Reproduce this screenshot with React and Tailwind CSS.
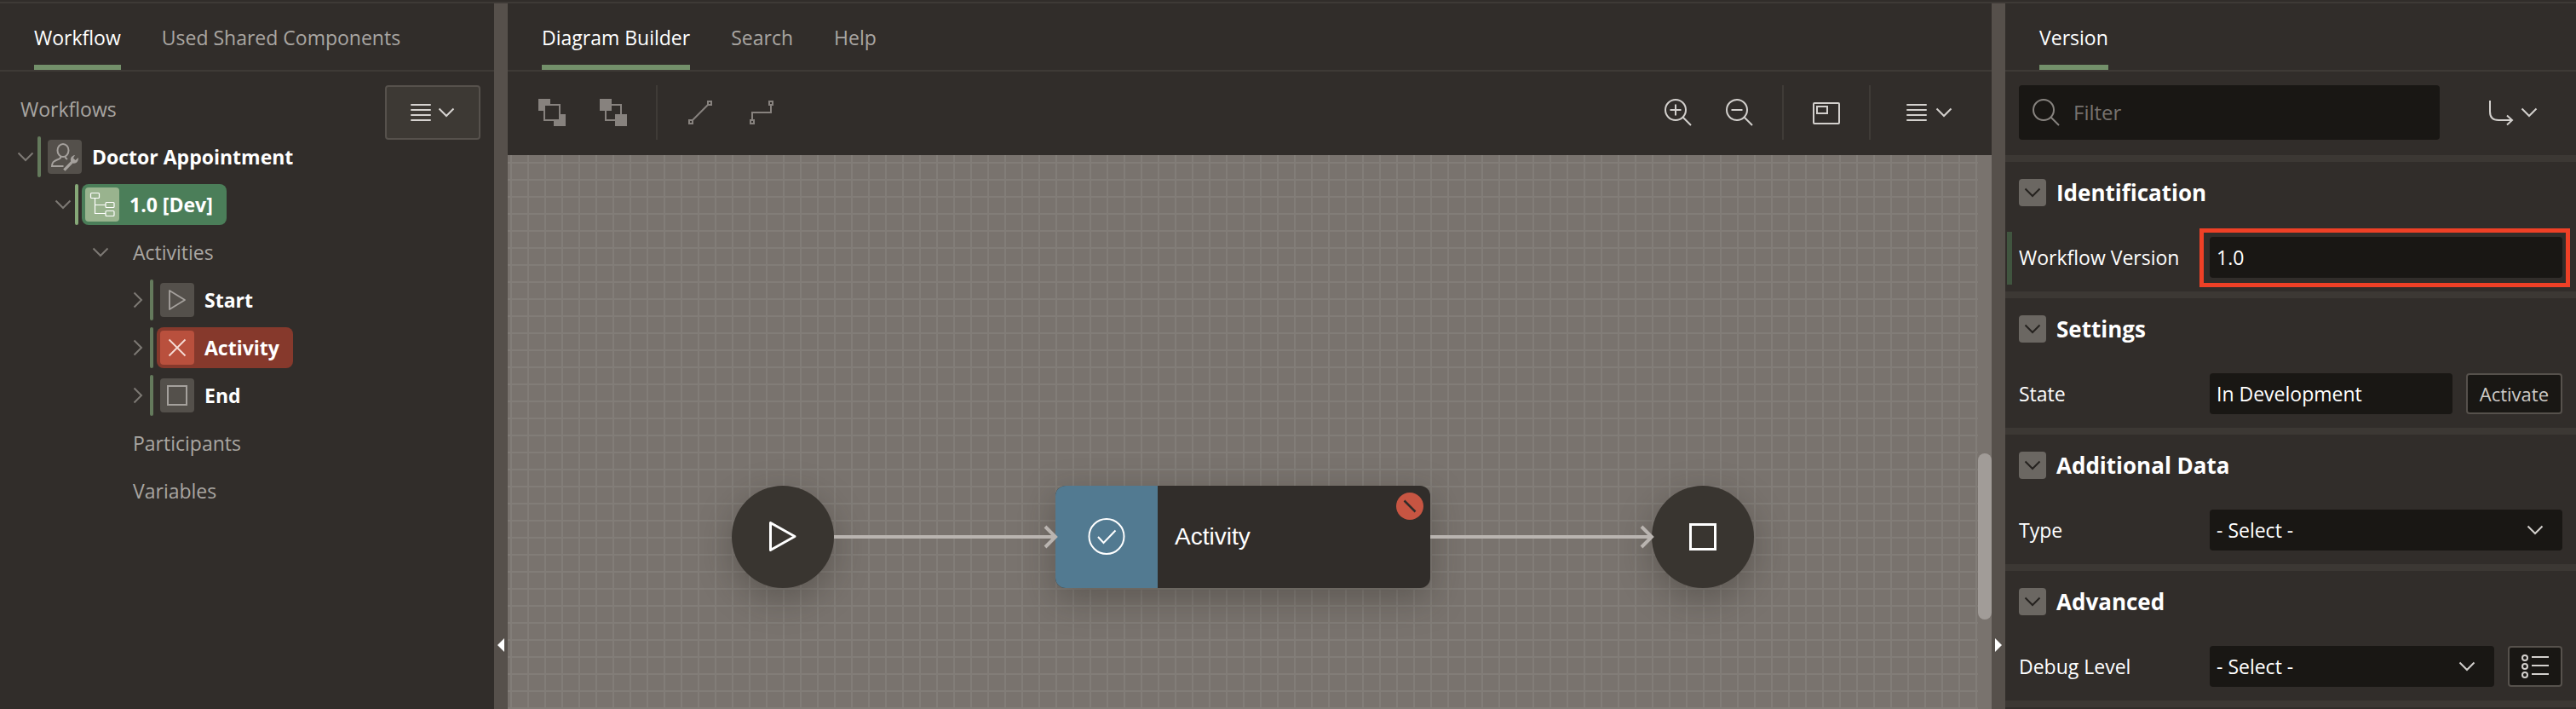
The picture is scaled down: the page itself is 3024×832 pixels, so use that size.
const ICON = { fill: "none", stroke: "currentColor" };

function Chevron({ dir = "down", className = "" }) {
  return dir === "down" ? (
    <svg width="20" height="12" viewBox="0 0 20 12" className={className} {...ICON} strokeWidth="2" aria-hidden="true">
      <path d="M1.5 1.5 10 10l8.500-8.500" />
    </svg>
  ) : (
    <svg width="12" height="20" viewBox="0 0 12 20" className={className} {...ICON} strokeWidth="2" aria-hidden="true">
      <path d="M1.500 1.500 10 10l-8.500 8.500" />
    </svg>
  );
}

function MenuIcon() {
  return (
    <svg width="24" height="20" viewBox="0 0 24 20" {...ICON} strokeWidth="2" strokeLinecap="round" aria-hidden="true">
      <path d="M1 1h22M1 7h22M1 13h22M1 19h22" />
    </svg>
  );
}

function Tabs({ items, label }) {
  return (
    <div role="tablist" aria-label={label} className="flex h-20 items-stretch gap-12 border-b-2 border-[#3e3a36] px-10">
      {items.map((t, i) => (
        <button
          key={t}
          type="button"
          role="tab"
          aria-selected={i === 0}
          className={
            "border-b-[6px] pt-2 text-[23px] font-medium " +
            (i === 0 ? "border-[#73906a] text-white" : "border-transparent text-[#a9a6a2]")
          }
        >
          {t}
        </button>
      ))}
    </div>
  );
}

function UserWrench() {
  return (
    <svg width="40" height="40" viewBox="0 0 40 40" {...ICON} strokeWidth="2" aria-hidden="true">
      <ellipse cx="18" cy="12.500" rx="6.500" ry="7.500" />
      <path d="M15.500 19.500c0 2.500-1.500 3-4.500 4-4 1.500-6 3-6 7.500h13.500M20.500 19.500c0 2 1 2.500 2.500 3.500" />
      <path d="M32 18c-4 .5-6 4-4.800 7.200L18.200 34.500l2.300 2.300 9-9.300c3.500 1 6.700-1.500 6.500-6.500l-3.500 3-2.500-2.500z" fill="currentColor" stroke="none" />
    </svg>
  );
}

function FlowTree() {
  return (
    <svg width="40" height="40" viewBox="0 0 40 40" {...ICON} strokeWidth="1.200" aria-hidden="true">
      <rect x="6.500" y="6.500" width="10" height="6" rx="1" />
      <rect x="24" y="17.500" width="10" height="6" rx="1" />
      <rect x="24" y="27.500" width="10" height="6" rx="1" />
      <path d="M11.500 12.500V30.500H24M11.500 20.500H24" />
    </svg>
  );
}

const GLYPHS = {
  user: <UserWrench />,
  flow: <FlowTree />,
  start: (
    <svg width="40" height="40" viewBox="0 0 40 40" {...ICON} strokeWidth="1.800" strokeLinejoin="round" aria-hidden="true">
      <path d="M11 9v22l18-11z" />
    </svg>
  ),
  error: (
    <svg width="40" height="40" viewBox="0 0 40 40" {...ICON} strokeWidth="1.800" aria-hidden="true">
      <path d="M10.500 10.500l19 19M29.500 10.500l-19 19" />
    </svg>
  ),
  end: (
    <svg width="40" height="40" viewBox="0 0 40 40" {...ICON} strokeWidth="2" aria-hidden="true">
      <rect x="9" y="9" width="22" height="22" />
    </svg>
  ),
};

const TONES = {
  plain: { pill: "", box: "bg-[#54504b] text-[#a5a19d]", bar: "bg-[#647a5c]" },
  green: { pill: "bg-[#4b7e59]", box: "bg-[#99b38e] text-white", bar: "bg-[#86a878]" },
  red: { pill: "bg-[#86392c]", box: "bg-[#b9503d] text-[#f6dcd6]", bar: "bg-[#647a5c]" },
};

function Item({ open, glyph, tone = "plain", children }) {
  const t = TONES[tone];
  return (
    <div className="flex h-12 items-center">
      <button type="button" aria-label="Toggle" aria-expanded={open} className="mr-1 flex h-5 w-5 items-center justify-center text-[#7d7974]">
        <Chevron dir={open ? "down" : "right"} />
      </button>
      <span className={"mr-1 h-12 w-1 rounded-sm " + t.bar} />
      <span className={"flex h-12 items-center gap-3 rounded-lg pr-4 pl-1 " + t.pill}>
        <span className={"rounded " + t.box}>{GLYPHS[glyph]}</span>
        <span className="text-[23px] font-bold text-white">{children}</span>
      </span>
    </div>
  );
}

function Leaf({ open, children }) {
  return (
    <div className="flex h-12 items-center text-[23px] font-medium text-[#a9a6a2]">
      <span className="mr-7 flex w-5 text-[#7d7974]">{open && <Chevron />}</span>
      {children}
    </div>
  );
}

function WorkflowPanel() {
  return (
    <aside className="flex w-[580px] shrink-0 flex-col">
      <Tabs label="Workflow" items={["Workflow", "Used Shared Components"]} />
      <div className="flex items-start justify-between pt-4 pr-4 pl-5">
        <ul className="flex flex-col gap-2 pt-1">
          <li className="flex flex-col gap-2">
            <div className="flex h-12 items-center pl-1 text-[23px] font-medium text-[#a9a6a2]">Workflows</div>
            <Item open glyph="user">Doctor Appointment</Item>
            <ul className="flex flex-col gap-2 pl-11">
              <li className="flex flex-col gap-2">
                <Item open glyph="flow" tone="green">1.0 [Dev]</Item>
                <ul className="flex flex-col gap-2 pl-11">
                  <li className="flex flex-col gap-2">
                    <Leaf open>Activities</Leaf>
                    <ul className="flex flex-col gap-2 pl-11">
                      <li><Item glyph="start">Start</Item></li>
                      <li><Item glyph="error" tone="red">Activity</Item></li>
                      <li><Item glyph="end">End</Item></li>
                    </ul>
                  </li>
                  <li><Leaf>Participants</Leaf></li>
                  <li><Leaf>Variables</Leaf></li>
                </ul>
              </li>
            </ul>
          </li>
        </ul>
        <button type="button" aria-label="Tree menu" className="flex h-16 w-28 items-center justify-center gap-2 rounded border-2 border-[#56514c] bg-[#3d3934] text-[#d6d3d0]">
          <MenuIcon />
          <Chevron />
        </button>
      </div>
    </aside>
  );
}

function Splitter({ dir }) {
  return (
    <div role="separator" aria-orientation="vertical" className="flex w-4 shrink-0 flex-col items-center justify-end bg-[#56504b] pb-[67px]">
      <svg width="8" height="16" viewBox="0 0 8 16" fill="#fff" aria-hidden="true">
        <path d={dir === "left" ? "M8 0v16L0 8z" : "M0 0v16l8-8z"} />
      </svg>
    </div>
  );
}

function Tool({ label, className = "text-[#87827e]", children }) {
  return (
    <button type="button" aria-label={label} className={"flex h-16 items-center px-5 " + className}>
      {children}
    </button>
  );
}

function Magnifier({ children }) {
  return (
    <svg width="32" height="32" viewBox="0 0 32 32" {...ICON} strokeWidth="2" aria-hidden="true">
      <circle cx="13" cy="13" r="12" />
      <path d="M21.500 21.500l9.500 9.500" />
      {children}
    </svg>
  );
}

function Toolbar() {
  const divider = "mx-[14px] h-16 w-[2px] bg-[#3f3b37]";
  const bright = "text-[#d3d0cd]";
  return (
    <div className="flex h-[98px] items-start justify-between py-4 pr-[26px] pl-4">
      <div className="flex items-center">
        <Tool label="Bring to front">
          <svg width="32" height="32" viewBox="0 0 32 32" aria-hidden="true">
            <path d="M0 0h14v14H0zM18 18h14v14H18z" fill="currentColor" />
            <rect x="7" y="7" width="18" height="18" fill="#312d2a" stroke="currentColor" strokeWidth="2" />
          </svg>
        </Tool>
        <Tool label="Send to back">
          <svg width="32" height="32" viewBox="0 0 32 32" aria-hidden="true">
            <rect x="7" y="7" width="18" height="18" fill="none" stroke="currentColor" strokeWidth="2" />
            <path d="M0 0h14v14H0zM18 18h14v14H18z" fill="currentColor" />
          </svg>
        </Tool>
        <span className={divider} />
        <Tool label="Straight connector">
          <svg width="32" height="32" viewBox="0 0 32 32" {...ICON} strokeWidth="2" aria-hidden="true">
            <rect x="3" y="25" width="4" height="4" />
            <rect x="25" y="3" width="4" height="4" />
            <path d="M7 25L25 7" />
          </svg>
        </Tool>
        <Tool label="Elbow connector">
          <svg width="32" height="32" viewBox="0 0 32 32" {...ICON} strokeWidth="2" aria-hidden="true">
            <rect x="3" y="25" width="4" height="4" />
            <rect x="25" y="3" width="4" height="4" />
            <path d="M5 25v-9h22V7" />
          </svg>
        </Tool>
      </div>
      <div className="flex items-center">
        <Tool label="Zoom in" className={bright}>
          <Magnifier><path d="M13 6.500v13M6.500 13h13" /></Magnifier>
        </Tool>
        <Tool label="Zoom out" className={bright}>
          <Magnifier><path d="M6.500 13h13" /></Magnifier>
        </Tool>
        <span className={divider} />
        <Tool label="Overview" className={bright}>
          <svg width="32" height="28" viewBox="0 0 32 28" {...ICON} strokeWidth="2" aria-hidden="true">
            <rect x="1" y="3" width="30" height="24" rx="1" />
            <rect x="5" y="7" width="12" height="8" />
          </svg>
        </Tool>
        <span className={divider} />
        <button type="button" aria-label="Diagram menu" className={"ml-2 flex h-16 items-center gap-[10px] px-5 " + bright}>
          <MenuIcon />
          <Chevron />
        </button>
      </div>
    </div>
  );
}

function Canvas() {
  const shadow = "shadow-[0_12px_40px_rgba(40,36,32,0.35)]";
  return (
    <div className="flex flex-1 bg-[#79736e]">
      <div className="relative flex-1 overflow-hidden bg-[linear-gradient(#827d78_2px,transparent_2px),linear-gradient(90deg,#827d78_2px,transparent_2px)] bg-[length:20px_20px] bg-[position:3px_8px]">
        <div className={"absolute top-[388px] left-[263px] size-[120px] rounded-full bg-[#393530] " + shadow}>
          <svg width="120" height="120" viewBox="0 0 120 120" fill="none" stroke="#fff" strokeWidth="3" strokeLinejoin="round" aria-label="Start">
            <path d="M45.500 43.500v32L74 59.500z" />
          </svg>
        </div>
        <div className={"absolute top-[388px] left-[643px] flex h-[120px] w-[440px] overflow-hidden rounded-xl bg-[#312d2a] " + shadow}>
          <div className="w-[120px] bg-[#527a91]">
            <svg width="120" height="120" viewBox="0 0 120 120" fill="none" stroke="#fff" strokeWidth="2" aria-hidden="true">
              <circle cx="60" cy="59.500" r="20.500" />
              <path d="M50 60l6.500 7L70.500 52.500" />
            </svg>
          </div>
          <span className="flex items-center pl-5 font-['Liberation_Sans',sans-serif] text-[28px] text-white">Activity</span>
          <svg className="absolute top-2 right-2" width="32" height="32" viewBox="0 0 32 32" aria-label="Error">
            <circle cx="16" cy="16" r="16" fill="#c75542" />
            <path d="M9.500 9.500l13 13" stroke="#312d2a" strokeWidth="2.500" />
          </svg>
        </div>
        <div className={"absolute top-[388px] left-[1343px] size-[120px] rounded-full bg-[#393530] " + shadow}>
          <svg width="120" height="120" viewBox="0 0 120 120" fill="none" stroke="#fff" strokeWidth="3" aria-label="End">
            <rect x="45.500" y="45.500" width="29" height="29" />
          </svg>
        </div>
        <svg className="absolute top-[428px] left-[383px]" width="266" height="40" viewBox="0 0 266 40" fill="none" stroke="#b9b4b0" strokeWidth="4" aria-hidden="true">
          <path d="M0 20h260M248 8l12 12-12 12" />
        </svg>
        <svg className="absolute top-[428px] left-[1083px]" width="266" height="40" viewBox="0 0 266 40" fill="none" stroke="#b9b4b0" strokeWidth="4" aria-hidden="true">
          <path d="M0 20h260M248 8l12 12-12 12" />
        </svg>
      </div>
      <div className="flex w-4 flex-col justify-end pb-[105px]">
        <div className="h-[195px] rounded-full bg-[#a19c98]" />
      </div>
    </div>
  );
}

function Section({ title, children }) {
  return (
    <section className="h-40 border-b-8 border-[#3c3834] px-4 pt-5">
      <div className="mb-9 flex h-8 items-center gap-3">
        <button type="button" aria-label={"Collapse " + title} className="flex size-8 items-center justify-center rounded bg-[#6b6762] text-[#25221f]">
          <Chevron />
        </button>
        <h2 className="text-[26px] font-bold text-white">{title}</h2>
      </div>
      {children}
    </section>
  );
}

function Row({ id, label, changed, children }) {
  return (
    <div className="relative flex items-center">
      {changed && <span className="absolute -top-[6px] -left-[14px] h-[62px] w-[6px] bg-[#40553f]" />}
      <label htmlFor={id} className="w-56 shrink-0 text-[23px] font-medium text-white">{label}</label>
      <div className="flex flex-1 gap-4">{children}</div>
    </div>
  );
}

function Select({ id }) {
  return (
    <div className="relative flex-1">
      <select id={id} className="h-12 w-full appearance-none rounded bg-[#191714] px-2 text-[23px] font-medium text-white">
        <option>- Select -</option>
      </select>
      <Chevron className="pointer-events-none absolute top-[18px] right-[22px] text-[#d3d0cd]" />
    </div>
  );
}

function PropertyPanel() {
  const field = "h-12 w-full rounded bg-[#191714] px-2 text-[23px] font-medium text-white";
  return (
    <aside className="flex w-[670px] shrink-0 flex-col">
      <Tabs label="Properties" items={["Version"]} />
      <div className="flex items-start gap-7 border-b-8 border-[#3c3834] px-4 pt-4 pb-[18px]">
        <label className="flex h-16 flex-1 items-center gap-4 rounded bg-[#191714] px-4 text-[#87837f]">
          <Magnifier />
          <input aria-label="Filter" placeholder="Filter" className="min-w-0 flex-1 bg-transparent text-2xl outline-none placeholder:text-[#76726e]" />
        </label>
        <button type="button" aria-label="Go to group" className="flex h-16 w-[116px] items-center justify-center gap-2 text-[#d3d0cd]">
          <svg width="30" height="32" viewBox="0 0 30 32" {...ICON} strokeWidth="2" aria-hidden="true">
            <path d="M2 2v13c0 6.500 3.500 10 10 10h15M22 19.500l6 5.500-6 5.500" />
          </svg>
          <Chevron />
        </button>
      </div>
      <Section title="Identification">
        <Row id="version" label="Workflow Version" changed>
          <div className="relative flex-1">
            <input id="version" defaultValue="1.0" className={field} />
            <span className="pointer-events-none absolute -top-[10px] -right-[9px] -bottom-[11px] -left-3 border-[5px] border-[#ee4026]" />
          </div>
        </Row>
      </Section>
      <Section title="Settings">
        <Row id="state" label="State">
          <input id="state" readOnly defaultValue="In Development" className={field + " min-w-0 flex-1"} />
          <button type="button" className="h-12 rounded border-2 border-[#56514c] bg-[#191714] px-[14px] text-[22px] text-[#cfccc9]">Activate</button>
        </Row>
      </Section>
      <Section title="Additional Data">
        <Row id="type" label="Type">
          <Select id="type" />
        </Row>
      </Section>
      <Section title="Advanced">
        <Row id="debug" label="Debug Level">
          <Select id="debug" />
          <button type="button" aria-label="Choose debug level" className="flex h-12 w-16 items-center justify-center rounded border-2 border-[#56514c] bg-[#191714] text-[#d3d0cd]">
            <svg width="32" height="28" viewBox="0 0 32 28" {...ICON} strokeWidth="2" aria-hidden="true">
              <circle cx="4" cy="4" r="3" />
              <circle cx="4" cy="14" r="3" />
              <circle cx="4" cy="24" r="3" />
              <path d="M12 3h20M12 13h20M12 23h20" />
            </svg>
          </button>
        </Row>
      </Section>
    </aside>
  );
}

export default function App() {
  return (
    <div className="flex min-h-screen flex-col bg-[#312d2a] pt-[2px] font-['Open_Sans',sans-serif]">
      <div className="h-[2px] bg-[#3e3a36]" />
      <div className="flex flex-1">
        <WorkflowPanel />
        <Splitter dir="left" />
        <main className="flex min-w-0 flex-1 flex-col">
          <Tabs label="Editor" items={["Diagram Builder", "Search", "Help"]} />
          <Toolbar />
          <Canvas />
        </main>
        <Splitter dir="right" />
        <PropertyPanel />
      </div>
    </div>
  );
}
